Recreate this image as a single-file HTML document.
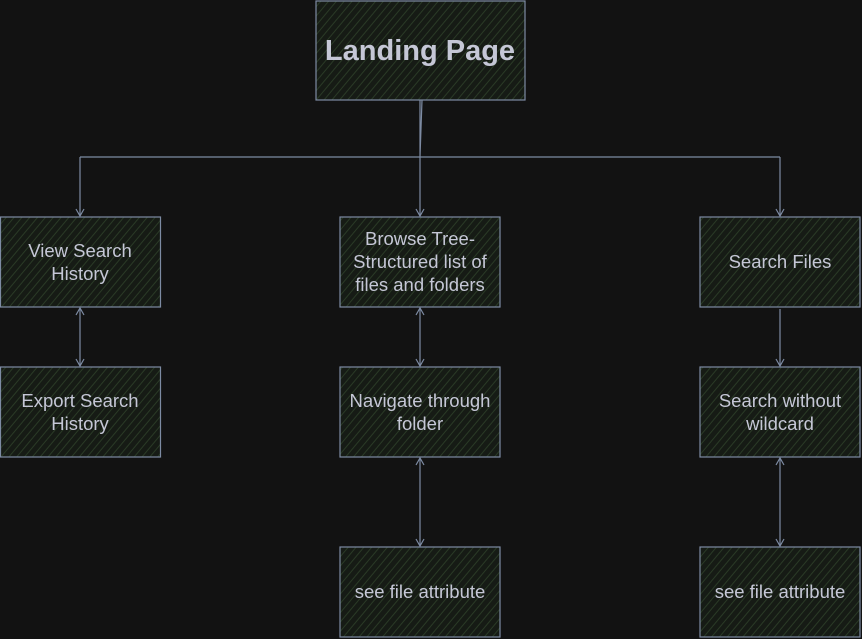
<!DOCTYPE html><html><head><style>body{margin:0;background:#121212;}svg{display:block}text{font-family:"Liberation Sans",sans-serif;fill:#c5c7d6;font-size:18.5px;text-anchor:middle}</style></head><body>
<svg width="862" height="639" viewBox="0 0 862 639">
<defs><pattern id="h" width="6" height="6" patternUnits="userSpaceOnUse" patternTransform="rotate(40)"><rect width="6" height="6" fill="#161b15"/><line x1="0" y1="0" x2="0" y2="6" stroke="#2a3a26" stroke-width="2"/></pattern></defs>
<g fill="url(#h)" stroke="#7d8ba3" stroke-width="1.2">
<rect x="316" y="1" width="209" height="99"/>
<rect x="0.5" y="217" width="160" height="90"/>
<rect x="340" y="217" width="160" height="90"/>
<rect x="700" y="217" width="160" height="90"/>
<rect x="0.5" y="367" width="160" height="90"/>
<rect x="340" y="367" width="160" height="90"/>
<rect x="700" y="367" width="160" height="90"/>
<rect x="340" y="547" width="160" height="90"/>
<rect x="700" y="547" width="160" height="90"/>
</g>
<g stroke="#7d8ba3" stroke-width="1.2" fill="none">
<path d="M420 100 L420 215 M422 100 L420 157"/>
<path d="M80 157 L780 157 M80 157 L80 215 M780 157 L780 215"/>
<path d="M80 309 L80 365 M420 309 L420 365 M780 309 L780 365 M420 459 L420 545 M780 459 L780 545"/>
<path d="M76 209 L80 216 L84 209 M416 209 L420 216 L424 209 M776 209 L780 216 L784 209"/>
<path d="M76 359 L80 366 L84 359 M416 359 L420 366 L424 359 M776 359 L780 366 L784 359"/>
<path d="M76 315 L80 308 L84 315 M416 315 L420 308 L424 315"/>
<path d="M416 465 L420 458 L424 465 M776 465 L780 458 L784 465 M416 539 L420 546 L424 539 M776 539 L780 546 L784 539"/>
</g>
<text x="420" y="60" style="font-size:29px;font-weight:bold">Landing Page</text>
<text x="80" y="257">View Search</text><text x="80" y="280">History</text>
<text x="420" y="245">Browse Tree-</text><text x="420" y="268">Structured list of</text><text x="420" y="291">files and folders</text>
<text x="780" y="268">Search Files</text>
<text x="80" y="407">Export Search</text><text x="80" y="430">History</text>
<text x="420" y="407">Navigate through</text><text x="420" y="430">folder</text>
<text x="780" y="407">Search without</text><text x="780" y="430">wildcard</text>
<text x="420" y="598">see file attribute</text>
<text x="780" y="598">see file attribute</text>
</svg></body></html>
